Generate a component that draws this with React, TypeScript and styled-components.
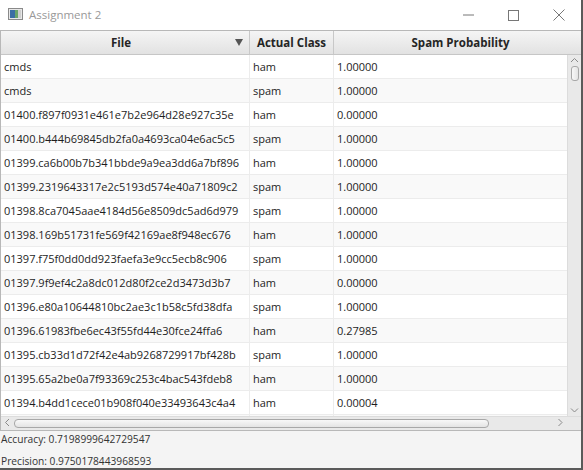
import React from "react";
import styled, { createGlobalStyle } from "styled-components";

const Global = createGlobalStyle`
  html, body { margin: 0; padding: 0; background: #f4f4f4; }
  body { font-family: "Open Sans", "Noto Sans", sans-serif; }
`;

const Window = styled.div`
  width: 583px;
  height: 470px;
  box-sizing: border-box;
  border-right: 2px solid #5a5a5a;
  border-bottom: 2px solid #5a5a5a;
  background: #f4f4f4;
  display: flex;
  flex-direction: column;
  overflow: hidden;
`;

const TitleBar = styled.div`
  height: 30px;
  flex: none;
  background: #fff;
  display: flex;
  align-items: center;
  padding-left: 8px;
  font-size: 11.5px;
  color: #999;
`;

const AppIcon = styled.svg`
  width: 15px;
  height: 12px;
  margin-right: 6px;
  margin-top: -2px;
`;

const TitleText = styled.span`
  flex: 1;
  margin-top: -2px;
`;

const WinButton = styled.div`
  width: 45px;
  height: 30px;
  display: flex;
  align-items: center;
  justify-content: center;
`;

const Table = styled.div`
  flex: none;
  height: 401px;
  border: 1px solid #b8b8b8;
  border-right: none;
  box-sizing: border-box;
  display: flex;
  flex-direction: column;
  background: #fff;
`;

const HeaderRow = styled.div`
  display: grid;
  grid-template-columns: 249px 84px 1fr;
  height: 24px;
  flex: none;
  background: linear-gradient(#f5f5f5, #e2e2e2);
  border-bottom: 1px solid #c6c6c6;
  box-sizing: border-box;
`;

const HeaderCell = styled.div<{ $last?: boolean; $padR?: number; $padL?: number }>`
  position: relative;
  display: flex;
  align-items: center;
  justify-content: center;
  font-weight: bold;
  font-size: 11.5px;
  color: #252525;
  border-right: ${(p) => (p.$last ? "none" : "1px solid #c8c8c8")};
  padding-bottom: 1px;
  padding-right: ${(p) => p.$padR ?? 0}px;
  padding-left: ${(p) => p.$padL ?? 0}px;
`;

const SortArrow = styled.span`
  position: absolute;
  right: 6px;
  top: 8px;
  width: 0;
  height: 0;
  border-left: 4.5px solid transparent;
  border-right: 4.5px solid transparent;
  border-top: 7px solid #555;
`;

const BodyArea = styled.div`
  flex: 1;
  display: flex;
  overflow: hidden;
`;

const Rows = styled.div`
  flex: 1;
  overflow: hidden;
`;

const Row = styled.div<{ $alt: boolean }>`
  display: grid;
  grid-template-columns: 249px 84px 1fr;
  height: 24px;
  box-sizing: border-box;
  border-bottom: 1px solid #ececec;
  background: ${(p) => (p.$alt ? "#f9f9f9" : "#ffffff")};
`;

const Cell = styled.div<{ $last?: boolean }>`
  display: flex;
  align-items: center;
  padding-left: 3px;
  padding-bottom: 1px;
  font-size: 11px;
  color: #1e1e1e;
  white-space: nowrap;
  overflow: hidden;
  border-right: ${(p) => (p.$last ? "none" : "1px solid #ececec")};
`;

const VScroll = styled.div`
  width: 13px;
  flex: none;
  background: #e9e9e9;
  border-left: 1px solid #dcdcdc;
  display: flex;
  flex-direction: column;
  align-items: center;
`;

const VThumb = styled.div`
  width: 8px;
  height: 15px;
  border: 1px solid #a8a8a8;
  border-radius: 3px;
  background: linear-gradient(to right, #f8f8f8, #e4e4e4);
  box-sizing: border-box;
`;

const ArrowBox = styled.div`
  height: 11px;
  width: 13px;
  display: flex;
  align-items: center;
  justify-content: center;
`;

const VSpacer = styled.div`
  flex: 1;
`;

const HScrollRow = styled.div`
  height: 14px;
  flex: none;
  display: flex;
  background: #e9e9e9;
  border-top: 1px solid #dcdcdc;
  box-sizing: border-box;
`;

const HTrack = styled.div`
  flex: 1;
  display: flex;
  align-items: center;
`;

const HThumb = styled.div`
  width: 475px;
  height: 9px;
  border: 1px solid #a8a8a8;
  border-radius: 4px;
  background: linear-gradient(#f8f8f8, #e4e4e4);
  box-sizing: border-box;
`;

const Corner = styled.div`
  width: 14px;
  background: #e9e9e9;
`;

const Footer = styled.div`
  display: flex;
  flex-direction: column;
`;

const StatLine = styled.div`
  height: 22px;
  box-sizing: border-box;
  padding-top: 1px;
  line-height: 14px;
  font-size: 10.2px;
  color: #333;
  white-space: pre;
  padding-left: 1px;
`;

const Chevron = ({ dir }: { dir: "up" | "down" | "left" | "right" }) => {
  const paths: Record<string, string> = {
    up: "M1 5 L4.5 1.5 L8 5",
    down: "M1 1.5 L4.5 5 L8 1.5",
    left: "M5 1 L1.5 4.5 L5 8",
    right: "M1.5 1 L5 4.5 L1.5 8",
  };
  const horiz = dir === "left" || dir === "right";
  return (
    <svg width={horiz ? 7 : 9} height={horiz ? 9 : 7} viewBox={horiz ? "0 0 7 9" : "0 0 9 7"}>
      <path d={paths[dir]} fill="none" stroke="#8a8a8a" strokeWidth="1" />
    </svg>
  );
};

const data: [string, string, string][] = [
  ["cmds", "ham", "1.00000"],
  ["cmds", "spam", "1.00000"],
  ["01400.f897f0931e461e7b2e964d28e927c35e", "ham", "0.00000"],
  ["01400.b444b69845db2fa0a4693ca04e6ac5c5", "spam", "1.00000"],
  ["01399.ca6b00b7b341bbde9a9ea3dd6a7bf896", "ham", "1.00000"],
  ["01399.2319643317e2c5193d574e40a71809c2", "spam", "1.00000"],
  ["01398.8ca7045aae4184d56e8509dc5ad6d979", "spam", "1.00000"],
  ["01398.169b51731fe569f42169ae8f948ec676", "ham", "1.00000"],
  ["01397.f75f0dd0dd923faefa3e9cc5ecb8c906", "spam", "1.00000"],
  ["01397.9f9ef4c2a8dc012d80f2ce2d3473d3b7", "ham", "0.00000"],
  ["01396.e80a10644810bc2ae3c1b58c5fd38dfa", "spam", "1.00000"],
  ["01396.61983fbe6ec43f55fd44e30fce24ffa6", "ham", "0.27985"],
  ["01395.cb33d1d72f42e4ab9268729917bf428b", "spam", "1.00000"],
  ["01395.65a2be0a7f93369c253c4bac543fdeb8", "ham", "1.00000"],
  ["01394.b4dd1cece01b908f040e33493643c4a4", "ham", "0.00004"],
  ["", "", ""],
];

export default function App() {
  return (
    <>
      <Global />
      <Window>
        <TitleBar>
          <AppIcon viewBox="0 0 15 12">
            <rect x="0.5" y="0.5" width="14" height="11" fill="#e8e8e8" stroke="#8a8a8a" />
            <rect x="2" y="2" width="5" height="8" fill="#3b6ea5" />
            <rect x="7" y="2" width="3" height="8" fill="#6aa56a" />
            <rect x="10" y="2" width="3" height="8" fill="#cfcfcf" />
          </AppIcon>
          <TitleText>Assignment 2</TitleText>
          <WinButton>
            <svg width="12" height="2"><line x1="0" y1="1" x2="11" y2="1" stroke="#777" /></svg>
          </WinButton>
          <WinButton>
            <svg width="11" height="11"><rect x="0.5" y="0.5" width="10" height="10" fill="none" stroke="#777" /></svg>
          </WinButton>
          <WinButton>
            <svg width="12" height="12"><path d="M0.5 0.5 L11.5 11.5 M11.5 0.5 L0.5 11.5" stroke="#777" /></svg>
          </WinButton>
        </TitleBar>
        <Table>
          <HeaderRow>
            <HeaderCell $padR={8}>
              File
              <SortArrow />
            </HeaderCell>
            <HeaderCell>Actual Class</HeaderCell>
            <HeaderCell $last $padL={6}>Spam Probability</HeaderCell>
          </HeaderRow>
          <BodyArea>
            <Rows>
              {data.map((r, i) => (
                <Row key={i} $alt={i % 2 === 1}>
                  <Cell>{r[0]}</Cell>
                  <Cell>{r[1]}</Cell>
                  <Cell $last>{r[2]}</Cell>
                </Row>
              ))}
            </Rows>
            <VScroll>
              <ArrowBox><Chevron dir="up" /></ArrowBox>
              <VThumb />
              <VSpacer />
              <ArrowBox><Chevron dir="down" /></ArrowBox>
            </VScroll>
          </BodyArea>
          <HScrollRow>
            <ArrowBox><Chevron dir="left" /></ArrowBox>
            <HTrack><HThumb /></HTrack>
            <ArrowBox><Chevron dir="right" /></ArrowBox>
            <Corner />
          </HScrollRow>
        </Table>
        <Footer>
          <StatLine>Accuracy: 0.7198999642729547</StatLine>
          <StatLine>Precision: 0.9750178443968593</StatLine>
        </Footer>
      </Window>
    </>
  );
}
